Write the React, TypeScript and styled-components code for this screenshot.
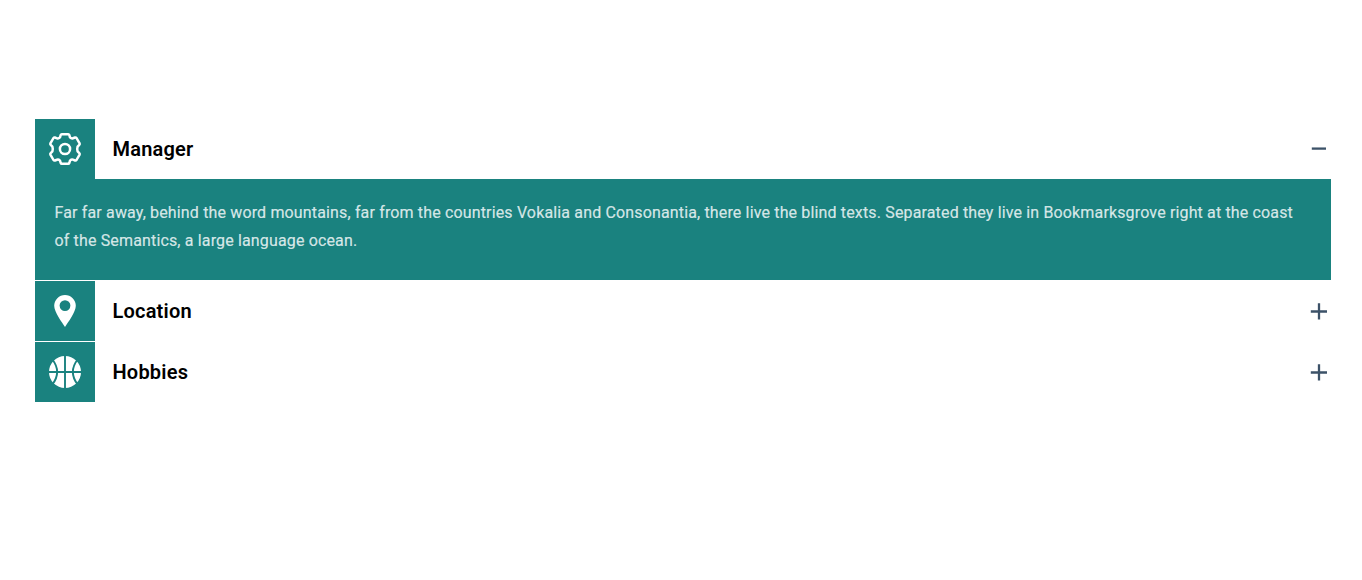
import React, { useState } from 'react';
import styled, { createGlobalStyle } from 'styled-components';

const Global = createGlobalStyle`
  body { margin: 0; background: #fff; font-family: Roboto, sans-serif; }
`;
const Page = styled.main`
  padding: 119px 31px 0 35px;
`;
const Item = styled.section`
  & + & { margin-top: 1px; }
`;
const Header = styled.button`
  display: flex; align-items: center; width: 100%; height: 60px;
  padding: 0; border: 0; background: #fff; color: #000;
  font: 600 20px/30px Roboto, sans-serif; text-align: left; cursor: pointer;
`;
const IconBox = styled.span`
  display: flex; align-items: center; justify-content: center;
  width: 60px; height: 60px; margin-right: 17.5px;
  background: #1a827f; color: #fff;
`;
const Icon = styled.svg`
  width: 34px; height: 34px; fill: none; stroke: none;
`;
const Title = styled.span`
  flex: 1; letter-spacing: 0.2px;
`;
const Sign = styled.svg`
  width: 24px; height: 24px; stroke: #3c5268; stroke-width: 2.3;
`;
const Panel = styled.div`
  box-sizing: border-box; height: 101px; padding: 20px 20px 20px 19.5px;
  background: #1a827f; color: rgba(255, 255, 255, 0.8);
  font-size: 16px; line-height: 28px; letter-spacing: 0.15px;
  -webkit-text-stroke: 0.2px rgba(255, 255, 255, 0.7);
`;

const Gear = () => (
  <Icon viewBox="-17 -17 34 34">
    <g stroke="#fff" strokeWidth="2.5" strokeLinejoin="round">
      <circle r="5.1" />
      <path d="M-3.2-14.8H3.2Q4-14.8 4.3-14L5-11.6Q6.5-10.2 7.9-10.7L10.1-11.5Q11-11.7 11.5-11L14.6-5.6Q15-4.8 14.3-4.1L12.6-2.4Q11.8 0 12.6 2.4L14.3 4.1Q15 4.8 14.6 5.6L11.5 11Q11 11.7 10.1 11.5L7.9 10.7Q6.5 10.2 5 11.6L4.3 14Q4 14.8 3.2 14.8H-3.2Q-4 14.8-4.3 14L-5 11.6Q-6.5 10.2-7.9 10.7L-10.1 11.5Q-11 11.7-11.5 11L-14.6 5.6Q-15 4.8-14.3 4.1L-12.6 2.4Q-11.8 0-12.6-2.4L-14.3-4.1Q-15-4.8-14.6-5.6L-11.5-11Q-11-11.7-10.1-11.5L-7.9-10.7Q-6.5-10.2-5-11.6L-4.3-14Q-4-14.8-3.2-14.8Z" />
    </g>
  </Icon>
);
const Pin = () => (
  <Icon viewBox="-17 -17 34 34">
    <path fill="#fff" fillRule="evenodd" d="M0-16A10.8 10.8 0 0 1 10.8-5.2C10.8 1 3 11.5 0 16C-3 11.5-10.8 1-10.8-5.2A10.8 10.8 0 0 1 0-16ZM0-10.8A5.4 5.4 0 1 0 0 0A5.4 5.4 0 1 0 0-10.8Z" />
  </Icon>
);
const Ball = () => (
  <Icon viewBox="-17 -17 34 34">
    <circle r="16" fill="#fff" />
    <path stroke="#1a827f" strokeWidth="1.9" d="M0-17V17M-17 0H17M-13-13Q-2.7 0-13 13M13-13Q2.7 0 13 13" />
  </Icon>
);

const items = [
  {
    title: 'Manager',
    icon: <Gear />,
    text: 'Far far away, behind the word mountains, far from the countries Vokalia and Consonantia, there live the blind texts. Separated they live in Bookmarksgrove right at the coast of the Semantics, a large language ocean.',
  },
  { title: 'Location', icon: <Pin />, text: '' },
  { title: 'Hobbies', icon: <Ball />, text: '' },
];

export default function App() {
  const [open, setOpen] = useState(0);
  return (
    <Page>
      <Global />
      {items.map((item, i) => (
        <Item key={item.title}>
          <Header aria-expanded={open === i} onClick={() => setOpen(open === i ? -1 : i)}>
            <IconBox>{item.icon}</IconBox>
            <Title>{item.title}</Title>
            <Sign viewBox="0 0 24 24">
              <path d={open === i ? 'M4.8 11.6H19' : 'M3.8 12.5H20M12 4.2V20.6'} />
            </Sign>
          </Header>
          {open === i && <Panel>{item.text}</Panel>}
        </Item>
      ))}
    </Page>
  );
}
